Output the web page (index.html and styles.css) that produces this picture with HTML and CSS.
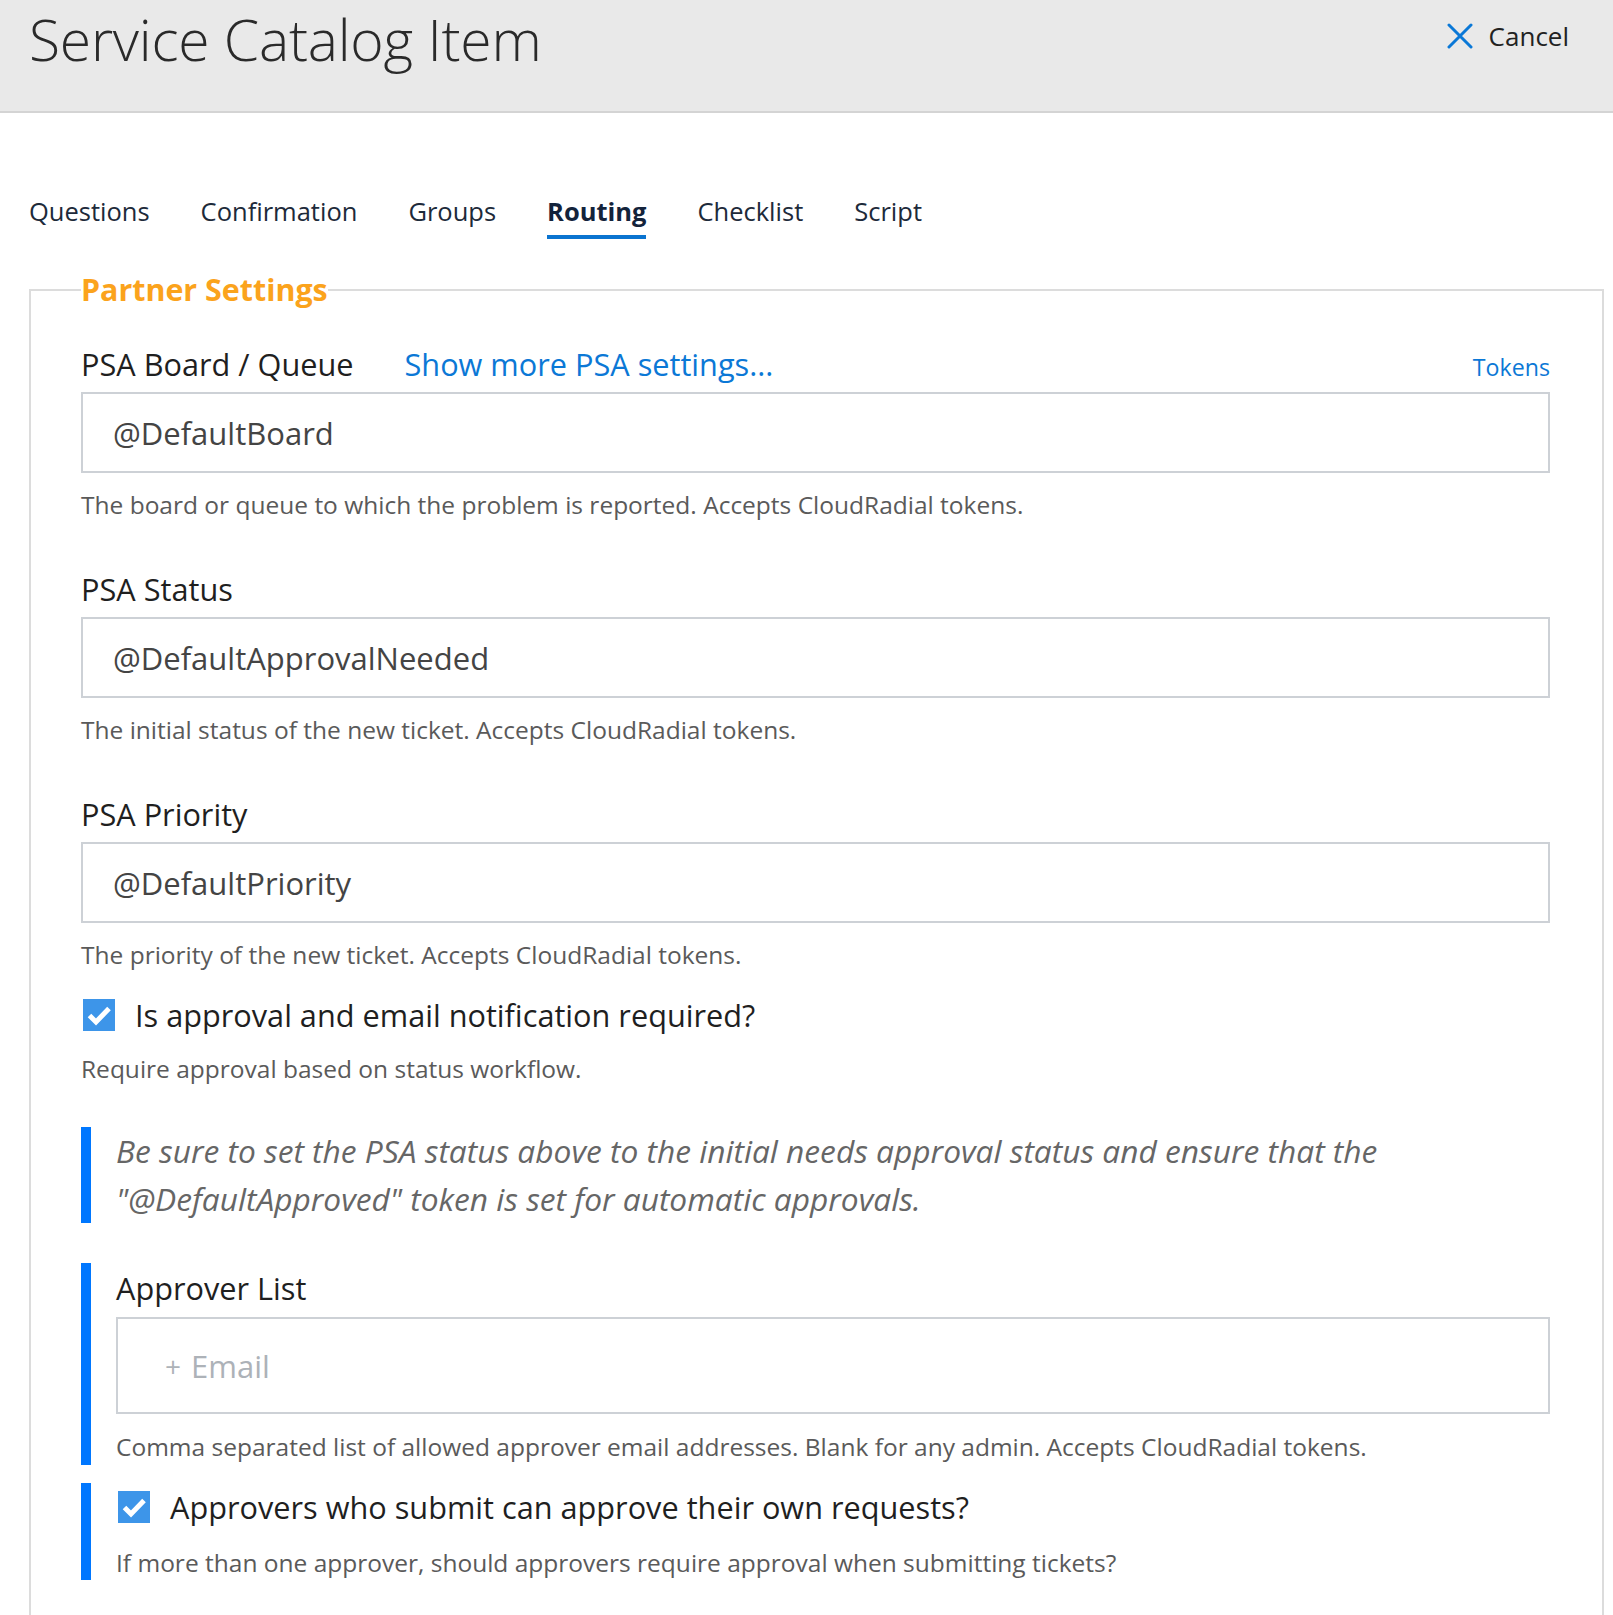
FILE: index.html
```html
<!DOCTYPE html>
<html lang="en">
<head>
<meta charset="utf-8">
<title>Service Catalog Item</title>
<link rel="stylesheet" href="styles.css">
</head>
<body>
<header class="topbar">
  <h1 class="title">Service Catalog Item</h1>
  <a class="cancel" href="#">
    <svg class="cancel-icon" viewBox="0 0 26 26" width="26" height="26" aria-hidden="true">
      <path d="M2 2 L24 24 M24 2 L2 24" stroke="#0a78d7" stroke-width="3" fill="none" stroke-linecap="round"/>
    </svg>
    <span>Cancel</span>
  </a>
</header>

<nav class="tabs">
  <a class="tab" href="#">Questions</a>
  <a class="tab" href="#">Confirmation</a>
  <a class="tab" href="#">Groups</a>
  <a class="tab active" href="#">Routing</a>
  <a class="tab" href="#">Checklist</a>
  <a class="tab" href="#">Script</a>
</nav>

<fieldset class="panel">
  <legend class="legend">Partner Settings</legend>

  <div class="field">
    <div class="label-row">
      <span class="label">PSA Board / Queue</span>
      <a class="more" href="#">Show more PSA settings...</a>
      <a class="tokens" href="#">Tokens</a>
    </div>
    <div class="input">@DefaultBoard</div>
    <p class="help">The board or queue to which the problem is reported. Accepts CloudRadial tokens.</p>
  </div>

  <div class="field">
    <div class="label-row"><span class="label">PSA Status</span></div>
    <div class="input">@DefaultApprovalNeeded</div>
    <p class="help">The initial status of the new ticket. Accepts CloudRadial tokens.</p>
  </div>

  <div class="field">
    <div class="label-row"><span class="label">PSA Priority</span></div>
    <div class="input">@DefaultPriority</div>
    <p class="help">The priority of the new ticket. Accepts CloudRadial tokens.</p>
  </div>

  <label class="check-row">
    <svg class="check" viewBox="0 0 32 32" width="32" height="32" aria-hidden="true">
      <rect width="32" height="32" fill="#3d95e9"/>
      <path d="M6.5 16.5 L13 23 L26 9.5" stroke="#fff" stroke-width="5" fill="none"/>
    </svg>
    <span class="check-label">Is approval and email notification required?</span>
  </label>
  <p class="help help-check">Require approval based on status workflow.</p>

  <blockquote class="note">Be sure to set the PSA status above to the initial needs approval status and ensure that the "@DefaultApproved" token is set for automatic approvals.</blockquote>

  <div class="bar-block approvers">
    <div class="label-row"><span class="label">Approver List</span></div>
    <div class="input input-email"><span class="plus">+</span> Email</div>
    <p class="help">Comma separated list of allowed approver email addresses. Blank for any admin. Accepts CloudRadial tokens.</p>
  </div>

  <div class="bar-block self-approve">
    <label class="check-row">
      <svg class="check" viewBox="0 0 32 32" width="32" height="32" aria-hidden="true">
        <rect width="32" height="32" fill="#3d95e9"/>
        <path d="M6.5 16.5 L13 23 L26 9.5" stroke="#fff" stroke-width="5" fill="none"/>
      </svg>
      <span class="check-label">Approvers who submit can approve their own requests?</span>
    </label>
    <p class="help">If more than one approver, should approvers require approval when submitting tickets?</p>
  </div>
</fieldset>
</body>
</html>
```

FILE: styles.css
```css
* { box-sizing: border-box; }

html, body {
  margin: 0;
  padding: 0;
  background: #ffffff;
}

body {
  font-family: "Open Sans", "Noto Sans", "Liberation Sans", sans-serif;
  color: #1f1f1f;
  width: 1613px;
  height: 1615px;
  overflow: hidden;
}

a { text-decoration: none; color: inherit; }

/* ---------- header ---------- */
.topbar {
  height: 113px;
  background: #e9e9e9;
  border-bottom: 2px solid #d4d4d4;
  display: flex;
  align-items: flex-start;
  justify-content: space-between;
  padding: 0 44px 0 29px;
}

.title {
  margin: 0;
  font-weight: 300;
  font-size: 57px;
  line-height: normal;
  color: #2a2a2a;
  letter-spacing: -0.25px;
}

.cancel {
  display: flex;
  align-items: center;
  gap: 16px;
  margin-top: 18px;
  font-size: 26px;
  line-height: 36px;
  color: #222;
}

.cancel-icon { display: block; }

/* ---------- tabs ---------- */
.tabs {
  display: flex;
  gap: 51px;
  padding: 0 0 0 29px;
  margin-top: 78px;
}

.tab {
  font-size: 25.5px;
  line-height: 40px;
  color: #1d2a3a;
  padding-bottom: 4px;
  border-bottom: 4px solid transparent;
}

.tab.active {
  font-weight: 700;
  color: #13233b;
  border-bottom-color: #0a74d0;
}

/* ---------- panel ---------- */
.panel {
  margin: 33px 9px 0 29px;
  padding: 36px 52px 0 50px;
  border: 2px solid #dcdcdc;
  border-bottom: none;
  min-inline-size: 0;
  height: 1400px;
}

.legend {
  padding: 0;
  font-size: 30.4px;
  line-height: 36px;
  font-weight: 700;
  color: #fba31c;
}

.field { margin-bottom: 49px; }
.field:nth-of-type(3) { margin-bottom: 0; }

.label-row {
  display: flex;
  align-items: baseline;
  height: 40px;
  line-height: 40px;
}

.label {
  font-size: 30.7px;
  color: #1f1f1f;
}

.more {
  margin-left: 51px;
  font-size: 30.7px;
  color: #0b78d6;
}

.tokens {
  margin-left: auto;
  font-size: 23.2px;
  color: #0b78d6;
}

.input {
  margin-top: 8px;
  height: 81px;
  border: 2px solid #cdd1d6;
  padding-left: 30px;
  display: flex;
  align-items: center;
  font-size: 31px;
  color: #444;
}

.help {
  margin: 17px 0 0;
  font-size: 24.5px;
  line-height: 30px;
  color: #5a5a5a;
}

/* ---------- checkbox rows ---------- */
.check-row {
  display: flex;
  align-items: center;
  gap: 20px;
  height: 40px;
  margin-top: 25px;
  padding-left: 2px;
}

.check { display: block; flex: none; }

.check-label {
  font-size: 30.7px;
  color: #1f1f1f;
}

.help-check { margin-top: 19px; }

/* ---------- note ---------- */
.note {
  margin: 43px 0 0;
  border-left: 10px solid #0077ff;
  padding-left: 25px;
  font-style: italic;
  font-size: 31.7px;
  line-height: 48px;
  color: #666;
}

/* ---------- bar blocks ---------- */
.bar-block {
  border-left: 10px solid #0077ff;
  padding-left: 25px;
}

.approvers {
  margin-top: 40px;
  padding-top: 5px;
  padding-bottom: 3px;
}

.approvers .input {
  margin-top: 9px;
  height: 97px;
  padding-left: 47px;
  color: #adb2b8;
}

.plus {
  font-size: 28px;
  margin-right: 10px;
}

.approvers .help { margin-top: 18px; }

.self-approve {
  margin-top: 18px;
  padding-top: 4px;
  padding-bottom: 2px;
}

.self-approve .check-row { margin-top: 0; }
.self-approve .help { margin-top: 21px; }
```
